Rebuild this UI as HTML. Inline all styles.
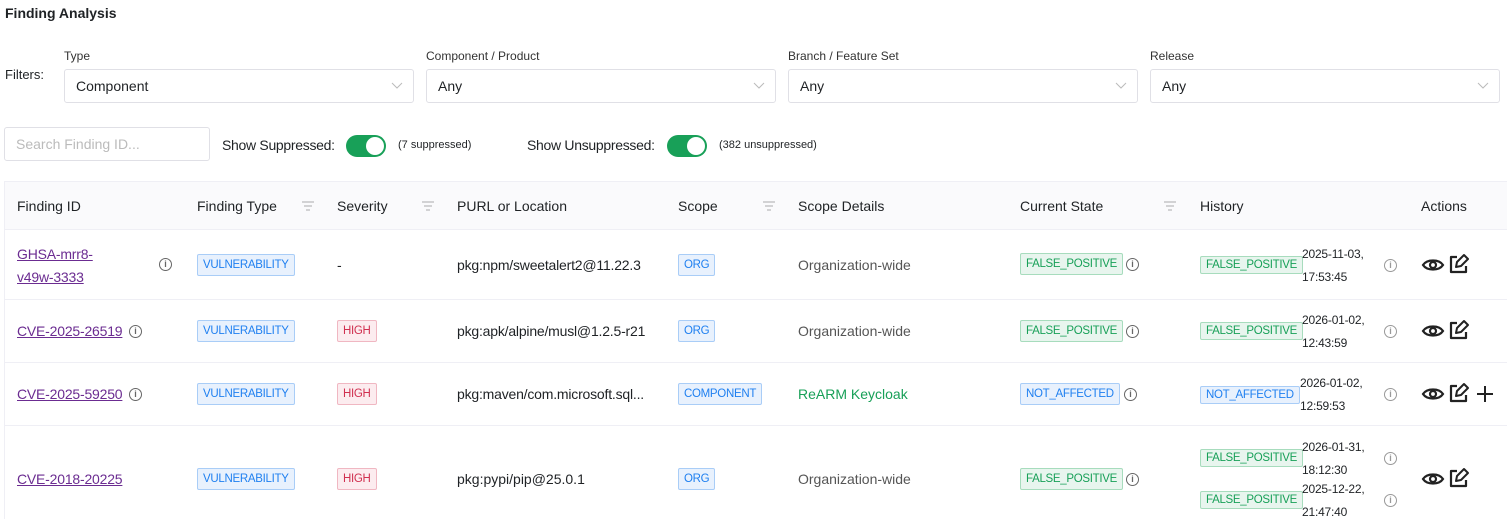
<!DOCTYPE html>
<html><head><meta charset="utf-8"><style>
*{box-sizing:border-box;margin:0;padding:0}
body{width:1507px;height:519px;overflow:hidden;background:#fff;font-family:"Liberation Sans",sans-serif;color:#1f2225;font-size:14px;position:relative}
.a{position:absolute;white-space:nowrap}
.sel{position:absolute;top:69px;height:34px;border:1px solid #e0e0e6;border-radius:3px;padding:0 11px;line-height:33px;font-size:14px}
.sel svg{position:absolute;right:10px;top:12px}
.lbl{position:absolute;top:49px;font-size:12px;color:#333}
.tog{position:absolute;top:135px;width:40px;height:22px;border-radius:11px;background:#18a058}
.tog:after{content:"";position:absolute;right:2px;top:2px;width:18px;height:18px;border-radius:50%;background:#fff}
.tag{position:absolute;height:22px;line-height:20px;padding:0 5px;font-size:11.5px;letter-spacing:-0.3px;border:1px solid;border-radius:2px;white-space:nowrap}
.g{color:#18a058;background:#e8f5ee;border-color:#a7dcbd}
.b{color:#2080f0;background:#e8f1fd;border-color:#a9cdf7}
.r{color:#d03050;background:#fcecef;border-color:#f0b7c2}
.lnk{color:#6b2c91;text-decoration:underline;position:absolute;letter-spacing:-0.2px;white-space:nowrap}
.hr{position:absolute;left:4px;width:1503px;height:1px;background:#efeff5}
.info{position:absolute;width:13px;height:13px;border:1.3px solid #666;border-radius:50%;font-size:9px;line-height:10px;text-align:center;color:#666;font-weight:bold}
.ilt{border-color:#999;color:#999}
.flt{position:absolute;top:200px}
.dt{font-size:12px;line-height:23px;letter-spacing:-0.2px}
</style></head><body>
<div class="a" style="left:5px;top:5px;font-weight:bold;font-size:14px">Finding Analysis</div>
<div class="a" style="left:5px;top:67px;font-size:13px">Filters:</div>
<div class="lbl" style="left:64px">Type</div>
<div class="lbl" style="left:426px">Component / Product</div>
<div class="lbl" style="left:788px">Branch / Feature Set</div>
<div class="lbl" style="left:1150px">Release</div>
<div class="sel" style="left:64px;width:350px">Component<svg width="12" height="8"><path d="M1 1l5 5 5-5" fill="none" stroke="#bbb"/></svg></div>
<div class="sel" style="left:426px;width:350px">Any<svg width="12" height="8"><path d="M1 1l5 5 5-5" fill="none" stroke="#bbb"/></svg></div>
<div class="sel" style="left:788px;width:350px">Any<svg width="12" height="8"><path d="M1 1l5 5 5-5" fill="none" stroke="#bbb"/></svg></div>
<div class="sel" style="left:1150px;width:350px">Any<svg width="12" height="8"><path d="M1 1l5 5 5-5" fill="none" stroke="#bbb"/></svg></div>
<div class="sel" style="left:4px;top:127px;width:206px;color:#bbb">Search Finding ID...</div>
<div class="a" style="left:222px;top:137px;letter-spacing:-0.3px">Show Suppressed:</div>
<div class="tog" style="left:346px"></div>
<div class="a" style="left:398px;top:139px;font-size:11px">(7 suppressed)</div>
<div class="a" style="left:527px;top:137px;letter-spacing:-0.3px">Show Unsuppressed:</div>
<div class="tog" style="left:667px"></div>
<div class="a" style="left:719px;top:139px;font-size:11px">(382 unsuppressed)</div>

<div class="a" style="left:4px;top:181px;width:1503px;height:48px;background:#fafafc;border-top:1px solid #efeff5;border-left:1px solid #efeff5"></div>
<div class="hr" style="top:229px"></div><div class="hr" style="top:299px"></div><div class="hr" style="top:362px"></div><div class="hr" style="top:425px"></div>
<div class="a" style="left:4px;top:229px;width:1px;height:290px;background:#efeff5"></div>
<div class="a" style="left:17px;top:198px">Finding ID</div>
<div class="a" style="left:197px;top:198px">Finding Type</div>
<div class="a" style="left:337px;top:198px">Severity</div>
<div class="a" style="left:457px;top:198px">PURL or Location</div>
<div class="a" style="left:678px;top:198px">Scope</div>
<div class="a" style="left:798px;top:198px">Scope Details</div>
<div class="a" style="left:1020px;top:198px">Current State</div>
<div class="a" style="left:1200px;top:198px">History</div>
<div class="a" style="left:1421px;top:198px">Actions</div>
<svg class="flt" style="left:301px" width="14" height="12"><path d="M1 2h12M3 6h8M5 10h4" stroke="#bbb" stroke-width="1.3"/></svg>
<svg class="flt" style="left:421px" width="14" height="12"><path d="M1 2h12M3 6h8M5 10h4" stroke="#bbb" stroke-width="1.3"/></svg>
<svg class="flt" style="left:762px" width="14" height="12"><path d="M1 2h12M3 6h8M5 10h4" stroke="#bbb" stroke-width="1.3"/></svg>
<svg class="flt" style="left:1163px" width="14" height="12"><path d="M1 2h12M3 6h8M5 10h4" stroke="#bbb" stroke-width="1.3"/></svg>

<!-- row1 -->
<div class="lnk" style="left:17px;top:243px;line-height:23px">GHSA-mrr8-<br>v49w-3333</div>
<div class="info" style="left:159px;top:258px">i</div>
<div class="tag b" style="left:197px;top:254px">VULNERABILITY</div>
<div class="a" style="left:337px;top:257px">-</div>
<div class="a" style="left:457px;top:257px;letter-spacing:-0.2px">pkg:npm/sweetalert2@11.22.3</div>
<div class="tag b" style="left:678px;top:254px">ORG</div>
<div class="a" style="left:798px;top:257px;color:#555">Organization-wide</div>
<div class="tag g" style="left:1020px;top:253px">FALSE_POSITIVE</div>
<div class="info" style="left:1126px;top:258px">i</div>
<div class="tag g" style="left:1200px;top:256px;height:18px;line-height:16px">FALSE_POSITIVE</div>
<div class="a dt" style="left:1302px;top:243px">2025-11-03,<br>17:53:45</div>
<div class="info ilt" style="left:1384px;top:259px">i</div>
<!-- row2 -->
<div class="lnk" style="left:17px;top:323px">CVE-2025-26519</div>
<div class="info" style="left:129px;top:325px">i</div>
<div class="tag b" style="left:197px;top:320px">VULNERABILITY</div>
<div class="tag r" style="left:337px;top:320px">HIGH</div>
<div class="a" style="left:457px;top:323px;letter-spacing:-0.2px">pkg:apk/alpine/musl@1.2.5-r21</div>
<div class="tag b" style="left:678px;top:320px">ORG</div>
<div class="a" style="left:798px;top:323px;color:#555">Organization-wide</div>
<div class="tag g" style="left:1020px;top:320px">FALSE_POSITIVE</div>
<div class="info" style="left:1126px;top:325px">i</div>
<div class="tag g" style="left:1200px;top:322px;height:18px;line-height:16px">FALSE_POSITIVE</div>
<div class="a dt" style="left:1302px;top:309px">2026-01-02,<br>12:43:59</div>
<div class="info ilt" style="left:1384px;top:325px">i</div>
<!-- row3 -->
<div class="lnk" style="left:17px;top:386px">CVE-2025-59250</div>
<div class="info" style="left:129px;top:388px">i</div>
<div class="tag b" style="left:197px;top:383px">VULNERABILITY</div>
<div class="tag r" style="left:337px;top:383px">HIGH</div>
<div class="a" style="left:457px;top:386px;letter-spacing:-0.2px">pkg:maven/com.microsoft.sql...</div>
<div class="tag b" style="left:678px;top:383px">COMPONENT</div>
<div class="a" style="left:798px;top:386px;color:#18a058">ReARM Keycloak</div>
<div class="tag b" style="left:1020px;top:383px">NOT_AFFECTED</div>
<div class="info" style="left:1124px;top:388px">i</div>
<div class="tag b" style="left:1200px;top:386px;height:18px;line-height:16px">NOT_AFFECTED</div>
<div class="a dt" style="left:1300px;top:372px">2026-01-02,<br>12:59:53</div>
<div class="info ilt" style="left:1384px;top:388px">i</div>
<!-- row4 -->
<div class="lnk" style="left:17px;top:471px">CVE-2018-20225</div>
<div class="tag b" style="left:197px;top:468px">VULNERABILITY</div>
<div class="tag r" style="left:337px;top:468px">HIGH</div>
<div class="a" style="left:457px;top:471px">pkg:pypi/pip@25.0.1</div>
<div class="tag b" style="left:678px;top:468px">ORG</div>
<div class="a" style="left:798px;top:471px;color:#555">Organization-wide</div>
<div class="tag g" style="left:1020px;top:468px">FALSE_POSITIVE</div>
<div class="info" style="left:1126px;top:473px">i</div>
<div class="tag g" style="left:1200px;top:449px;height:18px;line-height:16px">FALSE_POSITIVE</div>
<div class="a dt" style="left:1302px;top:436px">2026-01-31,<br>18:12:30</div>
<div class="info ilt" style="left:1384px;top:452px">i</div>
<div class="tag g" style="left:1200px;top:491px;height:18px;line-height:16px">FALSE_POSITIVE</div>
<div class="a dt" style="left:1302px;top:478px">2025-12-22,<br>21:47:40</div>
<div class="info ilt" style="left:1384px;top:494px">i</div>

<!-- actions -->
<svg style="position:absolute;left:0;top:0" width="1507" height="519">
<defs>
<g id="eye"><path d="M-10 0C-6-6 6-6 10 0C6 6-6 6-10 0Z" fill="none" stroke="#222" stroke-width="2.2"/><circle r="3" fill="none" stroke="#222" stroke-width="2.2"/></g>
<g id="ed"><path d="M-2-7H-8v15h15V2" fill="none" stroke="#222" stroke-width="2.2" stroke-linejoin="round"/><path d="M-3 3l1-5 7-7 4 4-7 7z" fill="none" stroke="#222" stroke-width="2" stroke-linejoin="round"/></g>
</defs>
<use href="#eye" x="1433" y="265"/><use href="#ed" x="1459" y="264"/>
<use href="#eye" x="1433" y="331"/><use href="#ed" x="1459" y="330"/>
<use href="#eye" x="1433" y="394"/><use href="#ed" x="1459" y="393"/>
<path d="M1485 386v16M1477 394h16" stroke="#222" stroke-width="2"/>
<use href="#eye" x="1433" y="479"/><use href="#ed" x="1459" y="478"/>
</svg>
</body></html>
